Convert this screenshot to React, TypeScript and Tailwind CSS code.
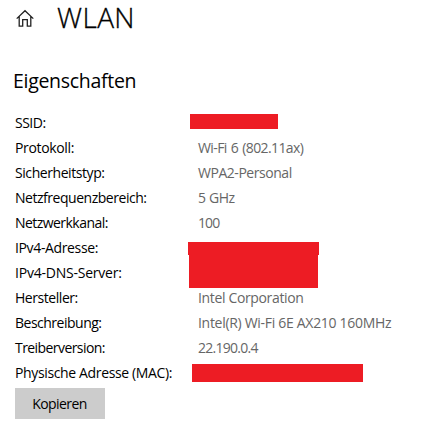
import type { ReactNode } from "react";

type Row = { label: string; labelClass: string; value: ReactNode };

const text = (value: string, tracking: string) => (
  <span className={`ml-[10px] leading-[23px] text-[#666666] ${tracking}`}>{value}</span>
);

const rows: Row[] = [
  { label: "SSID:", labelClass: "tracking-[-0.5px]", value: <div className="mt-[3px] ml-[2px] h-[15px] w-[88px] bg-[#ed1c24]" /> },
  { label: "Protokoll:", labelClass: "tracking-[-0.35px]", value: text("Wi-Fi 6 (802.11ax)", "tracking-[-0.6px] [word-spacing:1px]") },
  { label: "Sicherheitstyp:", labelClass: "tracking-[-0.43px]", value: text("WPA2-Personal", "tracking-[-0.46px]") },
  { label: "Netzfrequenzbereich:", labelClass: "tracking-[-0.47px]", value: text("5 GHz", "tracking-[-0.38px]") },
  { label: "Netzwerkkanal:", labelClass: "tracking-[-0.55px]", value: text("100", "tracking-[-0.9px]") },
  {
    label: "IPv4-Adresse:",
    labelClass: "tracking-[-0.36px]",
    value: (
      <div className="flex flex-col items-center pt-[6px]">
        <div className="h-[13px] w-[131px] shrink-0 bg-[#ed1c24]" />
        <div className="h-[6px] w-[129px] shrink-0 bg-[#ed1c24]" />
      </div>
    ),
  },
  { label: "IPv4-DNS-Server:", labelClass: "tracking-[-0.22px]", value: <div className="ml-px h-[27px] w-[129px] bg-[#ed1c24]" /> },
  { label: "Hersteller:", labelClass: "tracking-[-0.45px]", value: text("Intel Corporation", "tracking-[-0.35px]") },
  { label: "Beschreibung:", labelClass: "tracking-[-0.5px]", value: text("Intel(R) Wi-Fi 6E AX210 160MHz", "tracking-[-0.3px]") },
  { label: "Treiberversion:", labelClass: "tracking-[-0.57px]", value: text("22.190.0.4", "tracking-[-0.74px]") },
  { label: "Physische Adresse (MAC):", labelClass: "tracking-[-0.36px]", value: <div className="mt-[3px] ml-[4px] h-[18px] w-[171px] bg-[#ed1c24]" /> },
];

export default function App() {
  return (
    <main className="h-[433px] w-[447px] bg-white font-['Open_Sans','Noto_Sans',sans-serif] text-[14px] text-black">
      <header className="flex h-9 items-center pl-4">
        <svg className="h-[20px] w-[18px]" viewBox="0 0 18 20" fill="none" stroke="#222" strokeWidth="1.3">
          <path d="M.7 10.6 9 2.7l8.3 7.9M3.2 8.5v9.7h3.5v-6.5h4.6v6.5h3.5V8.5" />
        </svg>
        <h1 className="ml-[23px] h-[38px] self-start text-[28px] leading-[34px] font-light tracking-[0.4px] [-webkit-text-stroke:0.3px_black]">WLAN</h1>
      </header>
      <h2 className="mt-[30px] ml-[13px] h-[30px] text-[19.5px] leading-[30px] tracking-[-0.3px]">Eigenschaften</h2>
      <dl className="mt-[15px] ml-[15px]">
        {rows.map((row) => (
          <div key={row.label} className="flex h-[25px] items-start">
            <dt className={`w-[173px] leading-[23px] whitespace-nowrap ${row.labelClass}`}>{row.label}</dt>
            <dd className="flex items-start whitespace-nowrap">{row.value}</dd>
          </div>
        ))}
      </dl>
      <button className="mt-[2px] ml-[15px] flex h-[31px] w-[90px] items-center justify-center bg-[#cccccc] pr-px pb-px tracking-[-0.55px]">
        Kopieren
      </button>
    </main>
  );
}
